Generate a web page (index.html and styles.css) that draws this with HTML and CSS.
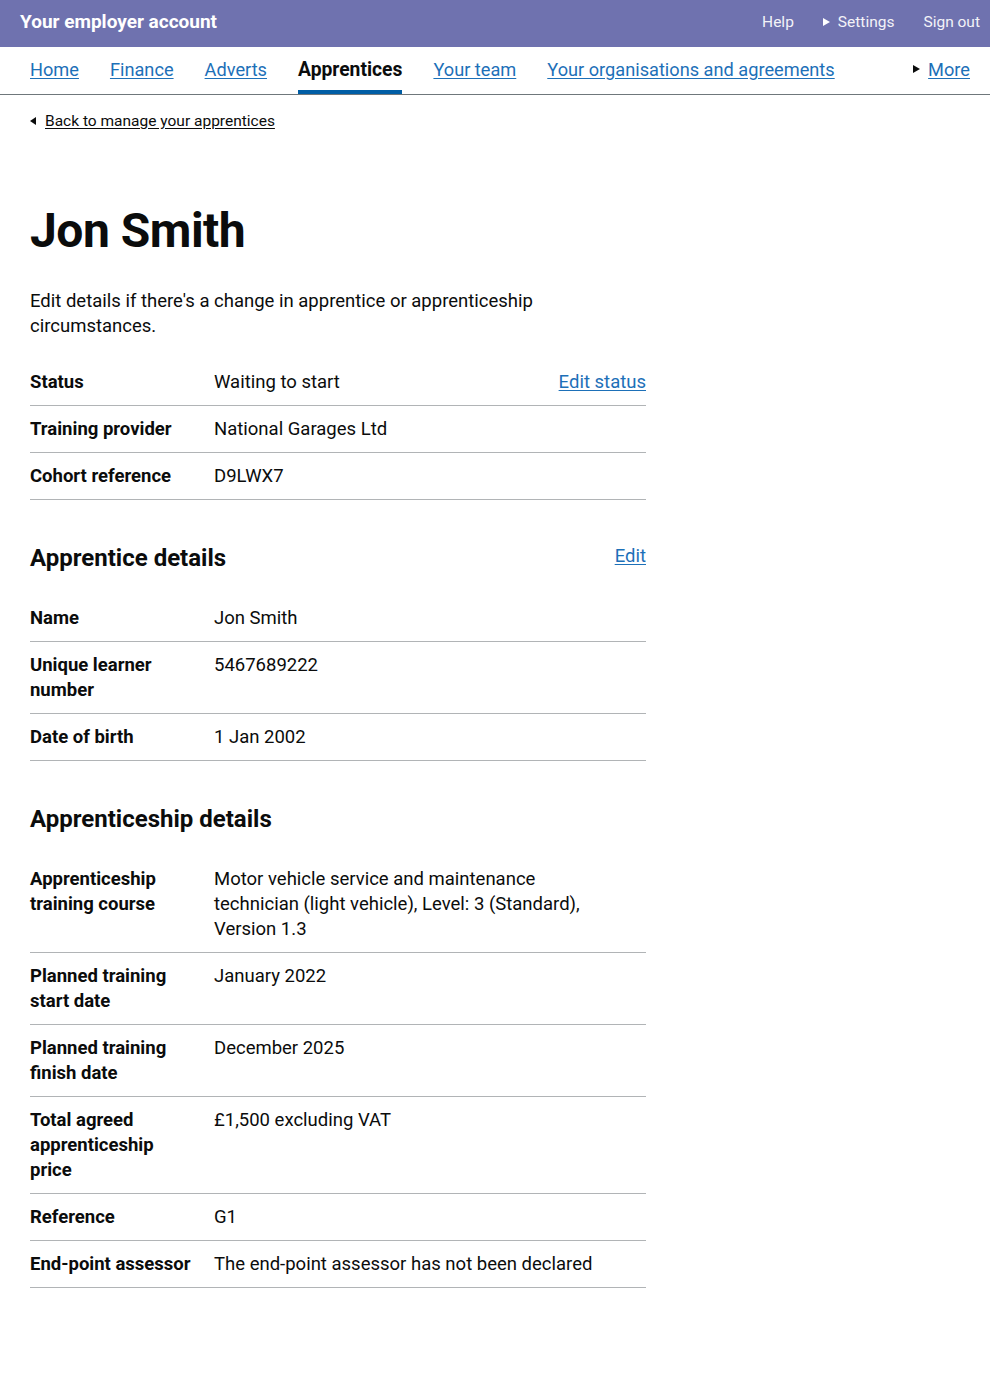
FILE: index.html
```html
<!DOCTYPE html>
<html lang="en">
<head>
<meta charset="utf-8">
<title>Jon Smith - Your employer account</title>
<link rel="stylesheet" href="styles.css">
</head>
<body>
<header class="masthead">
  <div class="masthead-title">Your employer account</div>
  <nav class="masthead-links">
    <a href="#" class="masthead-link">Help</a>
    <a href="#" class="masthead-link"><span class="tri-right tri-white"></span>Settings</a>
    <a href="#" class="masthead-link">Sign out</a>
  </nav>
</header>
<nav class="subnav">
  <ul class="subnav-list">
    <li><a href="#" class="subnav-link">Home</a></li>
    <li><a href="#" class="subnav-link">Finance</a></li>
    <li><a href="#" class="subnav-link">Adverts</a></li>
    <li><a href="#" class="subnav-link is-active">Apprentices</a></li>
    <li><a href="#" class="subnav-link">Your team</a></li>
    <li><a href="#" class="subnav-link">Your organisations and agreements</a></li>
  </ul>
  <div class="subnav-more"><span class="tri-right tri-black"></span><a href="#" class="subnav-link more-link">More</a></div>
</nav>
<main class="page">
  <a href="#" class="back-link"><span class="tri-left"></span>Back to manage your apprentices</a>
  <h1 class="heading-xl">Jon Smith</h1>
  <p class="body">Edit details if there's a change in apprentice or apprenticeship circumstances.</p>

  <dl class="summary">
    <div class="summary-row">
      <dt class="summary-key">Status</dt>
      <dd class="summary-value">Waiting to start</dd>
      <dd class="summary-action"><a href="#" class="link">Edit status</a></dd>
    </div>
    <div class="summary-row">
      <dt class="summary-key">Training provider</dt>
      <dd class="summary-value">National Garages Ltd</dd>
      <dd class="summary-action"></dd>
    </div>
    <div class="summary-row">
      <dt class="summary-key">Cohort reference</dt>
      <dd class="summary-value">D9LWX7</dd>
      <dd class="summary-action"></dd>
    </div>
  </dl>

  <div class="section-head">
    <h2 class="heading-m">Apprentice details</h2>
    <a href="#" class="link">Edit</a>
  </div>
  <dl class="summary">
    <div class="summary-row">
      <dt class="summary-key">Name</dt>
      <dd class="summary-value wide">Jon Smith</dd>
    </div>
    <div class="summary-row">
      <dt class="summary-key">Unique learner number</dt>
      <dd class="summary-value wide">5467689222</dd>
    </div>
    <div class="summary-row">
      <dt class="summary-key">Date of birth</dt>
      <dd class="summary-value wide">1 Jan 2002</dd>
    </div>
  </dl>

  <div class="section-head">
    <h2 class="heading-m">Apprenticeship details</h2>
  </div>
  <dl class="summary">
    <div class="summary-row">
      <dt class="summary-key">Apprenticeship training course</dt>
      <dd class="summary-value wide">Motor vehicle service and maintenance technician (light vehicle), Level: 3 (Standard), Version 1.3</dd>
    </div>
    <div class="summary-row">
      <dt class="summary-key">Planned training start date</dt>
      <dd class="summary-value wide">January 2022</dd>
    </div>
    <div class="summary-row">
      <dt class="summary-key">Planned training finish date</dt>
      <dd class="summary-value wide">December 2025</dd>
    </div>
    <div class="summary-row">
      <dt class="summary-key">Total agreed apprenticeship price</dt>
      <dd class="summary-value wide">£1,500 excluding VAT</dd>
    </div>
    <div class="summary-row">
      <dt class="summary-key">Reference</dt>
      <dd class="summary-value wide">G1</dd>
    </div>
    <div class="summary-row">
      <dt class="summary-key">End-point assessor</dt>
      <dd class="summary-value wide">The end-point assessor has not been declared</dd>
    </div>
  </dl>
</main>
</body>
</html>
```

FILE: styles.css
```css
* { box-sizing: border-box; }
html, body { margin: 0; padding: 0; background: #fff; }
body {
  font-family: Roboto, "Liberation Sans", Arial, sans-serif;
  color: #0b0c0c;
  -webkit-font-smoothing: antialiased;
}
a { color: #1d70b8; }

.masthead {
  background: #6f72af;
  height: 47px;
  display: flex;
  align-items: center;
  justify-content: space-between;
  padding: 0 10px 4px 20px;
}
.masthead-title {
  color: #fff;
  font-weight: 700;
  font-size: 19px;
}
.masthead-links { display: flex; gap: 29px; }
.masthead-link {
  color: #f3f3f8;
  text-decoration: none;
  font-size: 15.5px;
  display: flex;
  align-items: center;
}
.tri-right {
  display: inline-block;
  width: 0; height: 0;
  border-top: 4px solid transparent;
  border-bottom: 4px solid transparent;
  border-left: 7px solid #fff;
  margin-right: 8px;
}
.tri-black { border-left-color: #0b0c0c; }
.tri-left {
  display: inline-block;
  width: 0; height: 0;
  border-top: 4px solid transparent;
  border-bottom: 4px solid transparent;
  border-right: 6px solid #0b0c0c;
  margin-right: 9px;
}

.subnav {
  display: flex;
  justify-content: space-between;
  align-items: stretch;
  height: 48px;
  border-bottom: 1px solid #6f777b;
  padding: 0 20px 0 30px;
}
.subnav-list {
  list-style: none;
  margin: 0; padding: 0;
  display: flex;
  gap: 31px;
}
.subnav-list li { display: flex; }
.subnav-link {
  font-size: 18.2px;
  color: #1d70b8;
  text-decoration: underline;
  text-underline-offset: 2px;
  display: flex;
  align-items: center;
  padding-bottom: 3px;
}
.subnav-link.is-active {
  color: #0b0c0c;
  font-weight: 700;
  font-size: 19.3px;
  text-decoration: none;
  border-bottom: 4px solid #005ea5;
  padding-bottom: 0;
  padding-top: 1px;
}
.subnav-more { display: flex; align-items: center; padding-bottom: 3px; }
.subnav-link.more-link { padding-bottom: 0; }

.page { padding: 0 30px; width: 676px; }

.back-link {
  display: inline-flex;
  align-items: center;
  margin-top: 17px;
  font-size: 15.5px;
  color: #0b0c0c;
  text-decoration: underline;
  text-underline-offset: 2px;
}

.heading-xl {
  font-size: 48px;
  line-height: 50px;
  font-weight: 700;
  margin: 76px 0 33px;
  letter-spacing: -0.5px;
}
.body {
  font-size: 18.5px;
  line-height: 25px;
  margin: 0 0 20px;
  max-width: 530px;
}

.summary { margin: 0 0 43px; }
.summary-row {
  display: flex;
  border-bottom: 1px solid #b1b4b6;
}
.summary-key, .summary-value, .summary-action {
  margin: 0;
  padding: 11px 20px 10px 0;
  font-size: 18.5px;
  line-height: 25px;
}
.summary-key { font-weight: 700; width: 184px; flex: none; }
.summary-value { flex: 1; }
.summary-value.wide { flex: none; width: 400px; }
.summary-action { padding-right: 0; text-align: right; min-width: 90px; }

.link { color: #1d70b8; text-decoration: underline; text-underline-offset: 2px; font-size: 18.5px; }

.section-head {
  display: flex;
  justify-content: space-between;
  align-items: flex-start;
  margin-bottom: 22px;
}
.section-head .link { margin-top: 1px; line-height: 25px; }
.heading-m {
  font-size: 24px;
  line-height: 30px;
  font-weight: 700;
  margin: 0;
}
```
